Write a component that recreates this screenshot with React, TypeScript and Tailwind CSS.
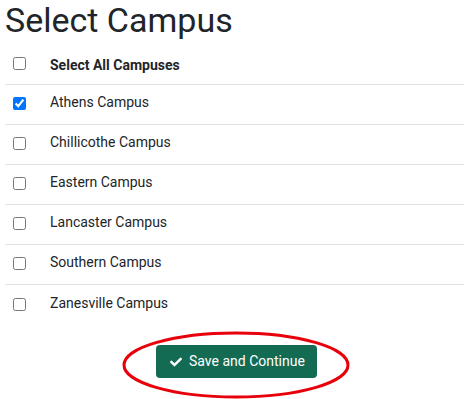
import { useState } from "react";

const campuses = [
  "Athens Campus",
  "Chillicothe Campus",
  "Eastern Campus",
  "Lancaster Campus",
  "Southern Campus",
  "Zanesville Campus",
];

const App = () => {
  const [checked, setChecked] = useState<string[]>(["Athens Campus"]);

  const toggle = (name: string) =>
    setChecked((c) => (c.includes(name) ? c.filter((x) => x !== name) : [...c, name]));

  return (
    <main className="min-h-screen bg-white px-[5px] font-['Roboto',sans-serif] text-[#212529]">
      <h2 className="h-[40px] text-[34px] leading-[40px] font-normal">Select Campus</h2>
      <div className="mt-[5px]">
        <label className="flex h-[40px] items-center border-b border-[#dee2e6] text-[14px]">
          <input
            type="checkbox"
            className="mb-[2px] ml-[8px] h-[13px] w-[13px]"
            checked={checked.length === campuses.length}
            onChange={(e) => setChecked(e.target.checked ? campuses : [])}
          />
          <span className="mt-[2px] ml-[24px] font-bold">Select All Campuses</span>
        </label>
        {campuses.map((name, i) => (
          <label
            key={name}
            className={
              "flex h-[40px] items-center text-[14px] " +
              (i < campuses.length - 1 ? "border-b border-[#dee2e6]" : "")
            }
          >
            <input
              type="checkbox"
              className="mb-[2px] ml-[8px] h-[13px] w-[13px] accent-[#0075ff]"
              checked={checked.includes(name)}
              onChange={() => toggle(name)}
            />
            <span className="mb-[4px] ml-[24px]">{name}</span>
          </label>
        ))}
      </div>
      <div className="mt-[20px] flex justify-center pl-[4px]">
        <div className="relative">
          <button className="flex h-[33px] w-[161px] items-center gap-[7px] rounded-[4px] bg-[#136b53] pl-[14px] text-[14px] text-white">
            <svg width="12" height="12" viewBox="0 0 512 512" fill="white">
              <path d="M173.9 439.4l-166.4-166.4c-10-10-10-26.2 0-36.2l36.2-36.2c10-10 26.2-10 36.2 0L192 312.7 432.1 72.6c10-10 26.2-10 36.2 0l36.2 36.2c10 10 10 26.2 0 36.2L210.1 439.4c-10 10-26.2 10-36.2 0z" />
            </svg>
            Save and Continue
          </button>
          <svg
            className="pointer-events-none absolute left-[-34px] top-[-14px]"
            width="228"
            height="68"
            viewBox="0 0 228 68"
          >
            <ellipse cx="114" cy="34" rx="112" ry="32" fill="none" stroke="#e8000b" strokeWidth="3" />
          </svg>
        </div>
      </div>
    </main>
  );
};

export default App;
